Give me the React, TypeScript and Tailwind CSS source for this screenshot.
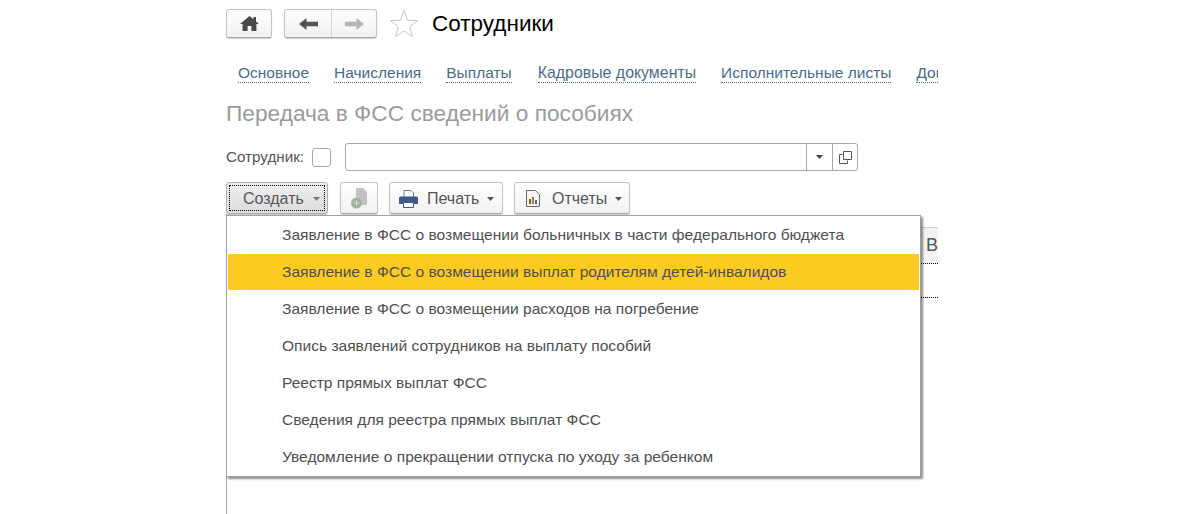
import React from "react";

const Caret = ({ c = "#555" }: { c?: string }) => (
  <svg width="7" height="4" viewBox="0 0 7 4"><path d="M0 0h7L3.5 4z" fill={c} /></svg>
);

const tabs = [
  ["Основное", "mr-[25px]"],
  ["Начисления", "mr-[25px]"],
  ["Выплаты", "mr-[26px]"],
  ["Кадровые документы", "mr-[25px] text-[15.900px]"],
  ["Исполнительные листы", "mr-[25px]"],
  ["Документы", ""],
];

const items = [
  "Заявление в ФСС о возмещении больничных в части федерального бюджета",
  "Заявление в ФСС о возмещении выплат родителям детей-инвалидов",
  "Заявление в ФСС о возмещении расходов на погребение",
  "Опись заявлений сотрудников на выплату пособий",
  "Реестр прямых выплат ФСС",
  "Сведения для реестра прямых выплат ФСС",
  "Уведомление о прекращении отпуска по уходу за ребенком",
];

const btn = "flex items-center rounded-[3px] border border-[#c4c4c4] border-b-[#a8a8a8] bg-gradient-to-b from-white to-[#f1f1f1] shadow-[0_1px_1px_rgba(0,0,0,0.2)]";

export default function App() {
  return (
    <div className="h-[514px] w-[1200px] overflow-hidden bg-white pl-[226px] font-['Liberation_Sans',Arial,sans-serif]">
      <div className="w-[712px] overflow-hidden pt-[9px]">
        <div className="flex h-[29px] items-center">
          <div className={`${btn} h-[29px] w-[46px] justify-center`}>
            <svg width="19" height="15" viewBox="0 0 19 15">
              <path d="M9.5 0L0 8h2.6v7h5v-5h3.8v5h5V8H19l-3-2.5V1h-2.6v2.3z" fill="#4a4a4a" />
            </svg>
          </div>
          <div className={`${btn} ml-3 h-[29px] w-[93px]`}>
            <div className="flex h-full w-[47px] items-center justify-center border-r border-[#d4d4d4]">
              <svg width="19" height="12" viewBox="0 0 19 12"><path d="M0 6l7.500-6v3.800H19v4.400H7.500V12z" fill="#555" /></svg>
            </div>
            <div className="flex h-full flex-1 items-center justify-center">
              <svg width="19" height="12" viewBox="0 0 19 12"><path d="M19 6l-7.500-6v3.800H0v4.400h11.500V12z" fill="#b5b5b5" /></svg>
            </div>
          </div>
          <svg className="ml-3" width="30" height="29" viewBox="0 0 30 29">
            <path d="M15 1.500l3.500 9.800 10.200.3-8.100 6.300 2.900 9.800L15 22.100l-8.500 5.600 2.900-9.800-8.100-6.300 10.200-.3z" fill="#fff" stroke="#c8c8c8" />
          </svg>
          <div className="ml-[13px] text-[22.500px] leading-[29px] text-black">Сотрудники</div>
        </div>

        <div className="mt-[25px] flex h-[20px] whitespace-nowrap pl-3 text-[15.500px] leading-[19px] text-[#4d6a8c]">
          {tabs.map(([t, m]) => (
            <span key={t} className={`${m} h-[20px] border-b border-dotted border-[#4d6a8c]`}>{t}</span>
          ))}
        </div>

        <div className="mt-[17px] h-[26px] text-[22.700px] leading-[26px] text-[#9b9b9b]">Передача в ФСС сведений о пособиях</div>

        <div className="mt-[17px] flex h-[28px] items-center">
          <span className="w-[86px] text-[15.200px] text-[#555]">Сотрудник:</span>
          <span className="h-[19px] w-[19px] rounded-[3px] border border-[#a8a8a8] bg-white" />
          <div className="ml-[14px] flex h-[28px] w-[513px] rounded-[3px] border border-[#a8a8a8]">
            <div className="flex-1" />
            <div className="flex w-[26px] items-center justify-center border-l border-[#a8a8a8]"><Caret c="#444" /></div>
            <div className="flex w-[25px] items-center justify-center border-l border-[#a8a8a8]">
              <svg width="13" height="13" viewBox="0 0 13 13" fill="none" stroke="#555">
                <path d="M3.500 3.500H.5v9h8V9.500" />
                <path d="M4.500.5h8v8h-8z" />
              </svg>
            </div>
          </div>
        </div>

        <div className="mt-[11px] flex h-[32px] text-[16px] text-[#555]">
          <div className="flex h-[32px] w-[102px] items-center rounded-[3px] border border-[#b0b0b0] bg-gradient-to-b from-[#efefef] to-[#dcdcdc] p-[2px] shadow-[0_1px_1px_rgba(0,0,0,0.25)]">
            <div className="flex h-full w-full items-center border border-dotted border-black pl-[13px] pt-px">
              Создать
              <span className="ml-[9px]"><Caret c="#777" /></span>
            </div>
          </div>
          <div className={`${btn} ml-3 h-[32px] w-[38px] justify-center`}>
            <svg width="17" height="21" viewBox="0 0 17 21">
              <path d="M5 0h7l4 4v13H5z" fill="#c2c2c2" />
              <circle cx="5.500" cy="15" r="5.500" fill="#a5b0a5" />
              <path d="M5.500 12v6M2.500 15h6" stroke="#d5dfd5" />
            </svg>
          </div>
          <div className={`${btn} ml-[11px] h-[32px] w-[114px] pl-[9px] pt-px`}>
            <svg width="19" height="18" viewBox="0 0 19 18">
              <path d="M5 .5h7l2.500 2.500v5H5z" fill="#fff" stroke="#6a7a92" />
              <path d="M1.500 6.500h16a1.500 1.500 0 011.500 1.500v6H15v-2H4v2H0V8a1.500 1.500 0 011.500-1.500z" fill="#3f5a86" />
              <path d="M4.500 12.500h10v5h-10z" fill="#fff" stroke="#3f5a86" />
            </svg>
            <span className="ml-[9px]">Печать</span>
            <span className="ml-[8px]"><Caret /></span>
          </div>
          <div className={`${btn} ml-[11px] h-[32px] w-[116px] pl-[11px] pt-px`}>
            <svg width="14" height="17" viewBox="0 0 14 17">
              <path d="M.5.5h9l4 4v12H.5z" fill="#f8f6f0" stroke="#6a6a6a" />
              <path d="M3 9h2v5H3z" fill="#a8453a" />
              <path d="M6 7h2v7H6z" fill="#7c8a3a" />
              <path d="M9 10h2v4H9z" fill="#4a6a92" />
            </svg>
            <span className="ml-[12px]">Отчеты</span>
            <span className="ml-[8px]"><Caret /></span>
          </div>
        </div>

        <div className="relative h-[300px] w-[712px]">
          <div className="absolute left-0 top-0 h-full w-px bg-[#a8a8a8]" />
          <div className="absolute left-[695px] top-[13px] h-[36px] w-[17px] border-t border-[#cfcfcf] bg-[#f4f4f4] pl-[5px] text-[18px] leading-[34px] text-[#555]">В</div>
          <div className="absolute left-[695px] top-[49px] w-[17px] border-t border-dotted border-black" />
          <div className="absolute left-[695px] top-[83px] w-[17px] border-t border-dotted border-black" />
          <div className="absolute left-0 top-[1px] h-[262px] w-[695px] border border-[#a0a0a0] bg-white p-px shadow-[2px_2px_2px_rgba(0,0,0,0.45)]">
            {items.map((t, i) => (
              <div key={t} className="h-[37px] text-[15.550px] leading-[36px] text-[#4f4f4f]">
                <div className={`h-[36px] pl-[54px] ${i === 1 ? "bg-[#fccb1f]" : ""}`}>{t}</div>
              </div>
            ))}
          </div>
        </div>
      </div>
    </div>
  );
}
